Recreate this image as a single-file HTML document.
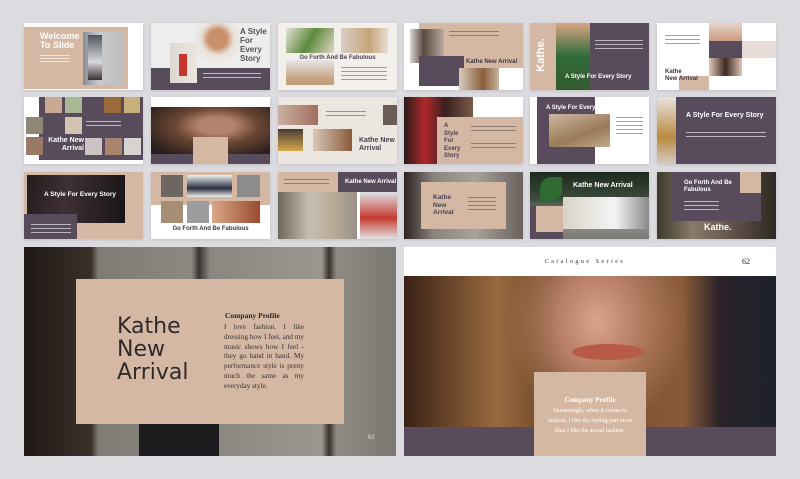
<!DOCTYPE html>
<html><head><meta charset="utf-8"><style>
*{margin:0;padding:0;box-sizing:border-box}
body{width:800px;height:479px;background:#dcdbdf;position:relative;overflow:hidden;font-family:"Liberation Sans",sans-serif}
.t{position:absolute;width:119px;height:67px;overflow:hidden;background:#fff;box-shadow:0 1px 3px rgba(0,0,0,.12)}
.t div,.L div{position:absolute}
.w{color:#fff;font-weight:bold}
.d{color:#4a4050;font-weight:bold}
.ln{background:rgba(255,255,255,.6);height:1px}
.lk{background:rgba(60,50,60,.45);height:1px}
.P{background:#584c5c}.T{background:#d5b8a3}
.serif{font-family:"Liberation Serif",serif}
</style></head><body>

<!-- Row 0 -->
<div class="t" style="left:24px;top:23px">
 <div class="T" style="left:0;top:4px;width:104px;height:62px"></div>
 <div style="left:59px;top:9px;width:40px;height:53px;background:linear-gradient(90deg,#8a8c92,#c9c9cc 40%,#bdbdc0)"></div>
 <div style="left:64px;top:12px;width:14px;height:45px;background:linear-gradient(#4d5360,#d8d8dc 60%,#3a3030)"></div>
 <div class="w" style="left:16px;top:9px;font-size:9px;line-height:9px">Welcome<br>To Slide</div>
 <div class="ln" style="left:16px;top:32px;width:30px"></div><div class="ln" style="left:16px;top:35px;width:30px"></div><div class="ln" style="left:16px;top:38px;width:30px"></div>
</div>
<div class="t" style="left:151px;top:23px;background:#eeeded">
 <div style="left:44px;top:0;width:45px;height:45px;background:radial-gradient(circle at 50% 35%,#c98f6a 0 25%,#e9e2da 45%,#eeeded 70%)"></div>
 <div class="P" style="left:0;top:45px;width:119px;height:22px"></div>
 <div style="left:19px;top:20px;width:27px;height:40px;background:linear-gradient(90deg,#dcd7d2,#ece6e0)"></div>
 <div style="left:28px;top:31px;width:8px;height:22px;background:#c7352e"></div>
 <div class="d" style="left:89px;top:4px;font-size:8px;line-height:9px;color:#5a4f5c">A Style<br>For<br>Every<br>Story</div>
 <div class="ln" style="left:52px;top:50px;width:58px"></div><div class="ln" style="left:52px;top:54px;width:58px"></div>
</div>
<div class="t" style="left:278px;top:23px;background:#f3efea">
 <div style="left:8px;top:5px;width:48px;height:25px;background:linear-gradient(120deg,#e8e2d8,#5d8a3c 50%,#e0d6c8)"></div>
 <div style="left:63px;top:5px;width:47px;height:25px;background:linear-gradient(90deg,#d8cfc6,#c6a578 60%,#e6ddd3)"></div>
 <div class="d" style="left:0;width:119px;text-align:center;top:32px;font-size:6px">Go Forth And Be Fabulous</div>
 <div style="left:8px;top:37px;width:48px;height:25px;background:linear-gradient(#e6e6e6,#c4a07c 80%)"></div>
 <div class="lk" style="left:63px;top:44px;width:46px"></div><div class="lk" style="left:63px;top:48px;width:46px"></div><div class="lk" style="left:63px;top:52px;width:46px"></div><div class="lk" style="left:63px;top:56px;width:46px"></div>
</div>
<div class="t" style="left:404px;top:23px">
 <div class="T" style="left:15px;top:0;width:104px;height:45px"></div>
 <div style="left:6px;top:6px;width:34px;height:34px;background:linear-gradient(90deg,#d9d6d2,#5a4a40 40%,#b9a9a0)"></div>
 <div class="P" style="left:15px;top:33px;width:45px;height:30px"></div>
 <div style="left:55px;top:45px;width:40px;height:22px;background:linear-gradient(90deg,#d7cbbd,#8b5e3a 60%,#c7b5a0)"></div>
 <div class="d" style="left:62px;top:36px;font-size:6px;color:#3d3540">Kathe New Arrival</div>
 <div class="lk" style="left:45px;top:8px;width:50px"></div><div class="lk" style="left:45px;top:12px;width:50px"></div>
</div>
<div class="t" style="left:530px;top:23px">
 <div class="T" style="left:0;top:0;width:26px;height:67px"></div>
 <div style="left:26px;top:0;width:34px;height:67px;background:linear-gradient(#d9a482,#2f6a38 50%,#345b2e)"></div>
 <div class="P" style="left:60px;top:0;width:59px;height:67px"></div>
 <div class="w" style="left:-6px;top:26px;font-size:11px;transform:rotate(-90deg)">Kathe.</div>
 <div class="w" style="left:35px;top:51px;font-size:6px">A Style For Every Story</div>
 <div class="ln" style="left:65px;top:17px;width:48px"></div><div class="ln" style="left:65px;top:21px;width:48px"></div><div class="ln" style="left:65px;top:25px;width:48px"></div>
</div>
<div class="t" style="left:657px;top:23px">
 <div style="left:52px;top:0;width:33px;height:18px;background:linear-gradient(#e8d3c8,#c99b80)"></div>
 <div class="P" style="left:52px;top:18px;width:33px;height:17px"></div>
 <div style="left:85px;top:18px;width:34px;height:17px;background:#e7dcd7"></div>
 <div style="left:52px;top:35px;width:33px;height:18px;background:linear-gradient(90deg,#e5c6b5,#3b2a24 50%,#e3c4b4)"></div>
 <div class="T" style="left:22px;top:53px;width:30px;height:14px"></div>
 <div class="d" style="left:8px;top:46px;font-size:6px;line-height:7px;color:#3d3540">Kathe<br>New Arrival</div>
 <div class="lk" style="left:8px;top:12px;width:35px"></div><div class="lk" style="left:8px;top:16px;width:35px"></div><div class="lk" style="left:8px;top:20px;width:35px"></div>
</div>

<!-- Row 1 -->
<div class="t" style="left:24px;top:97px">
 <div class="P" style="left:15px;top:0;width:104px;height:63px"></div>
 <div style="left:21px;top:0;width:17px;height:16px;background:#c9a990"></div>
 <div style="left:41px;top:0;width:17px;height:16px;background:#a9b893"></div>
 <div style="left:80px;top:0;width:17px;height:16px;background:#9a6a3a"></div>
 <div style="left:100px;top:0;width:16px;height:16px;background:#c7b07a"></div>
 <div style="left:2px;top:20px;width:17px;height:17px;background:#8f8676"></div>
 <div style="left:41px;top:20px;width:17px;height:17px;background:#d4c3b0"></div>
 <div style="left:2px;top:40px;width:17px;height:18px;background:#9a7a66"></div>
 <div style="left:61px;top:41px;width:17px;height:17px;background:#ccc3c5"></div>
 <div style="left:81px;top:41px;width:17px;height:17px;background:#a9856e"></div>
 <div style="left:100px;top:41px;width:17px;height:17px;background:#d6d3d0"></div>
 <div class="w" style="left:24px;top:40px;font-size:7px;line-height:8px;text-align:right;width:36px">Kathe New<br>Arrival</div>
 <div class="ln" style="left:62px;top:24px;width:35px"></div><div class="ln" style="left:62px;top:28px;width:35px"></div>
</div>
<div class="t" style="left:151px;top:97px">
 <div style="left:0;top:10px;width:119px;height:47px;background:radial-gradient(ellipse at 55% 40%,#b3826c 0 20%,#6a4632 45%,#2a1f1e 85%)"></div>
 <div class="P" style="left:0;top:57px;width:119px;height:10px"></div>
 <div class="T" style="left:42px;top:40px;width:35px;height:27px"></div>
</div>
<div class="t" style="left:278px;top:97px;background:#ece6e0">
 <div style="left:0;top:8px;width:40px;height:20px;background:linear-gradient(90deg,#c9b0a0,#a36d5e)"></div>
 <div style="left:105px;top:8px;width:14px;height:20px;background:#6a5a58"></div>
 <div style="left:0;top:32px;width:25px;height:22px;background:linear-gradient(#4a3a34,#d5a94a)"></div>
 <div style="left:35px;top:32px;width:39px;height:22px;background:linear-gradient(90deg,#d8c8b8,#8a5a3a)"></div>
 <div class="d" style="left:81px;top:40px;font-size:7px;line-height:8px;color:#4a4050">Kathe New<br>Arrival</div>
 <div class="lk" style="left:48px;top:14px;width:40px"></div><div class="lk" style="left:48px;top:18px;width:40px"></div>
</div>
<div class="t" style="left:404px;top:97px">
 <div style="left:0;top:0;width:69px;height:67px;background:linear-gradient(90deg,#2a1c1a,#b0282a 30%,#3a2020 60%,#7a5a48)"></div>
 <div class="T" style="left:33px;top:20px;width:86px;height:47px"></div>
 <div class="d" style="left:40px;top:26px;font-size:6px;line-height:7.5px;color:#4a4050">A<br>Style<br>For<br>Every<br>Story</div>
 <div class="lk" style="left:67px;top:29px;width:45px"></div><div class="lk" style="left:67px;top:33px;width:45px"></div><div class="lk" style="left:67px;top:46px;width:45px"></div><div class="lk" style="left:67px;top:50px;width:45px"></div>
</div>
<div class="t" style="left:530px;top:97px">
 <div class="P" style="left:7px;top:0;width:58px;height:67px"></div>
 <div style="left:19px;top:17px;width:61px;height:33px;background:linear-gradient(160deg,#cdb8a0,#9a7a58 60%,#c2aa8e)"></div>
 <div class="w" style="left:16px;top:8px;font-size:6px">A Style For Every Story</div>
 <div class="lk" style="left:86px;top:20px;width:27px"></div><div class="lk" style="left:86px;top:24px;width:27px"></div><div class="lk" style="left:86px;top:28px;width:27px"></div><div class="lk" style="left:86px;top:32px;width:27px"></div><div class="lk" style="left:86px;top:36px;width:27px"></div>
</div>
<div class="t" style="left:657px;top:97px">
 <div style="left:0;top:0;width:19px;height:67px;background:linear-gradient(#e8e4df,#b98a40 60%,#d4ccc4)"></div>
 <div class="P" style="left:19px;top:0;width:100px;height:67px"></div>
 <div class="w" style="left:29px;top:15px;font-size:7px">A Style For Every Story</div>
 <div class="ln" style="left:29px;top:35px;width:80px"></div><div class="ln" style="left:29px;top:39px;width:80px"></div>
</div>

<!-- Row 2 -->
<div class="t" style="left:24px;top:172px;background:#d5b8a3">
 <div style="left:3px;top:3px;width:98px;height:48px;background:linear-gradient(100deg,#231c1c,#3e3036 40%,#181414)"></div>
 <div class="P" style="left:0;top:42px;width:53px;height:25px"></div>
 <div class="w" style="left:20px;top:19px;font-size:6.5px">A Style For Every Story</div>
 <div class="ln" style="left:7px;top:52px;width:40px"></div><div class="ln" style="left:7px;top:56px;width:40px"></div><div class="ln" style="left:7px;top:60px;width:40px"></div>
</div>
<div class="t" style="left:151px;top:172px">
 <div class="T" style="left:0;top:0;width:119px;height:33px"></div>
 <div style="left:10px;top:3px;width:22px;height:22px;background:#6e6660"></div>
 <div style="left:36px;top:3px;width:45px;height:22px;background:linear-gradient(#f2f2f2,#2a3040 60%,#f0f0f0)"></div>
 <div style="left:86px;top:3px;width:23px;height:22px;background:#8c8c8c"></div>
 <div style="left:10px;top:29px;width:22px;height:22px;background:#a68e74"></div>
 <div style="left:36px;top:29px;width:22px;height:22px;background:#9c9c9c"></div>
 <div style="left:61px;top:29px;width:48px;height:22px;background:linear-gradient(90deg,#d8a888,#9a4a30)"></div>
 <div class="d" style="left:0;width:119px;text-align:center;top:54px;font-size:6px;color:#3d3540">Go Forth And Be Fabulous</div>
</div>
<div class="t" style="left:278px;top:172px">
 <div class="T" style="left:0;top:0;width:119px;height:20px"></div>
 <div class="P" style="left:60px;top:0;width:59px;height:20px"></div>
 <div class="w" style="left:67px;top:7px;font-size:6px">Kathe New Arrival</div>
 <div style="left:0;top:20px;width:79px;height:47px;background:linear-gradient(90deg,#6d6858,#c9bfb0 40%,#b8ab98 70%,#9a9088)"></div>
 <div style="left:82px;top:20px;width:37px;height:47px;background:linear-gradient(#dfe2e6,#c43a30 55%,#e2e2e2)"></div>
 <div class="lk" style="left:6px;top:7px;width:45px"></div><div class="lk" style="left:6px;top:11px;width:45px"></div>
</div>
<div class="t" style="left:404px;top:172px">
 <div style="left:0;top:0;width:119px;height:67px;background:linear-gradient(90deg,#2c2420,#8a8480 25%,#a8a29c 60%,#6a625c)"></div>
 <div class="T" style="left:17px;top:10px;width:85px;height:47px"></div>
 <div class="d" style="left:29px;top:22px;font-size:6.5px;line-height:7.5px;color:#4a4050">Kathe<br>New<br>Arrival</div>
 <div class="lk" style="left:64px;top:25px;width:28px"></div><div class="lk" style="left:64px;top:29px;width:28px"></div><div class="lk" style="left:64px;top:33px;width:28px"></div><div class="lk" style="left:64px;top:37px;width:28px"></div>
</div>
<div class="t" style="left:530px;top:172px">
 <div style="left:0;top:0;width:119px;height:67px;background:linear-gradient(#1e2a20,#3a4a3a 40%,#9a9a96 70%,#7a7874)"></div>
 <div style="left:33px;top:25px;width:86px;height:32px;background:linear-gradient(90deg,#d8d2c8,#f4f4f4 60%,#888)"></div>
 <div style="left:10px;top:5px;width:22px;height:25px;border-radius:50% 0;background:#2f6a30"></div>
 <div class="P" style="left:0;top:34px;width:33px;height:33px"></div>
 <div class="T" style="left:6px;top:34px;width:27px;height:26px"></div>
 <div class="w" style="left:43px;top:10px;font-size:7px">Kathe New Arrival</div>
</div>
<div class="t" style="left:657px;top:172px">
 <div style="left:0;top:0;width:119px;height:67px;background:linear-gradient(90deg,#3a3a2a,#8a7a6a 30%,#5a4a44 70%,#2a2a22)"></div>
 <div class="P" style="left:15px;top:0;width:89px;height:49px"></div>
 <div class="T" style="left:83px;top:0;width:21px;height:21px"></div>
 <div class="w" style="left:27px;top:8px;font-size:6px;line-height:7px">Go Forth And Be<br>Fabulous</div>
 <div class="ln" style="left:27px;top:29px;width:35px"></div><div class="ln" style="left:27px;top:33px;width:35px"></div><div class="ln" style="left:27px;top:37px;width:35px"></div>
 <div class="w" style="left:47px;top:50px;font-size:9px">Kathe.</div>
</div>

<!-- Large left -->
<div class="L" style="position:absolute;left:24px;top:247px;width:372px;height:209px;overflow:hidden;background:linear-gradient(90deg,#1e1814 0,#3a302a 18%,#7e7a74 20%,#8c8882 45%,#3a3430 47%,#8a8680 50%,#9a9690 80%,#3a322c 82%,#8e8a84 84%,#7a7670)">
 <div style="left:115px;top:150px;width:80px;height:59px;background:#1c1c1e"></div>
 <div style="left:52px;top:32px;width:268px;height:145px;background:#d5b8a3"></div>
 <div style="left:93px;top:68px;font-size:22px;line-height:23px;color:#2e2a2c;font-family:'DejaVu Sans','Liberation Sans',sans-serif">Kathe<br>New<br>Arrival</div>
 <div class="serif" style="left:201px;top:64px;font-size:7.5px;font-weight:bold;color:#2a2426">Company Profile</div>
 <div class="serif" style="left:200px;top:76px;width:80px;font-size:7.2px;line-height:9.8px;color:#3a3034;text-align:justify">I love fashion. I like dressing how I feel, and my music shows how I feel - they go hand in hand. My performance style is pretty much the same as my everyday style.</div>
 <div style="left:344px;top:188px;font-size:6px;color:#ddd">62</div>
</div>

<!-- Large right -->
<div class="L" style="position:absolute;left:404px;top:247px;width:372px;height:209px;overflow:hidden;background:#fff">
 <div class="serif" style="left:0;width:362px;text-align:center;top:12px;font-size:6px;letter-spacing:2.5px;color:#333">Catalogue Series</div>
 <div class="serif" style="left:338px;top:10px;font-size:8px;color:#222">62</div>
 <div style="left:0;top:29px;width:372px;height:151px;background:radial-gradient(ellipse 90px 110px at 52% 30%,#d8a48a 0,#b67e64 45%,rgba(120,70,40,0) 100%),linear-gradient(90deg,#3a2216,#9a6a40 25%,#6a4426 40%,#8a5a3a 75%,#2a2228 85%,#1e222c)"></div>
 <div style="left:168px;top:97px;width:72px;height:16px;border-radius:50%;background:#b85a48"></div>
 <div class="P" style="left:0;top:180px;width:372px;height:29px"></div>
 <div class="T" style="left:130px;top:125px;width:112px;height:84px"></div>
 <div class="serif" style="left:130px;width:112px;text-align:center;top:149px;font-size:7px;font-weight:bold;color:#fff">Company Profile</div>
 <div class="serif" style="left:140px;width:92px;text-align:center;top:160px;font-size:6px;line-height:9.8px;color:#fff">Interestingly, when it comes to fashion, I like the styling part more than I like the actual fashion.</div>
</div>
</body></html>
